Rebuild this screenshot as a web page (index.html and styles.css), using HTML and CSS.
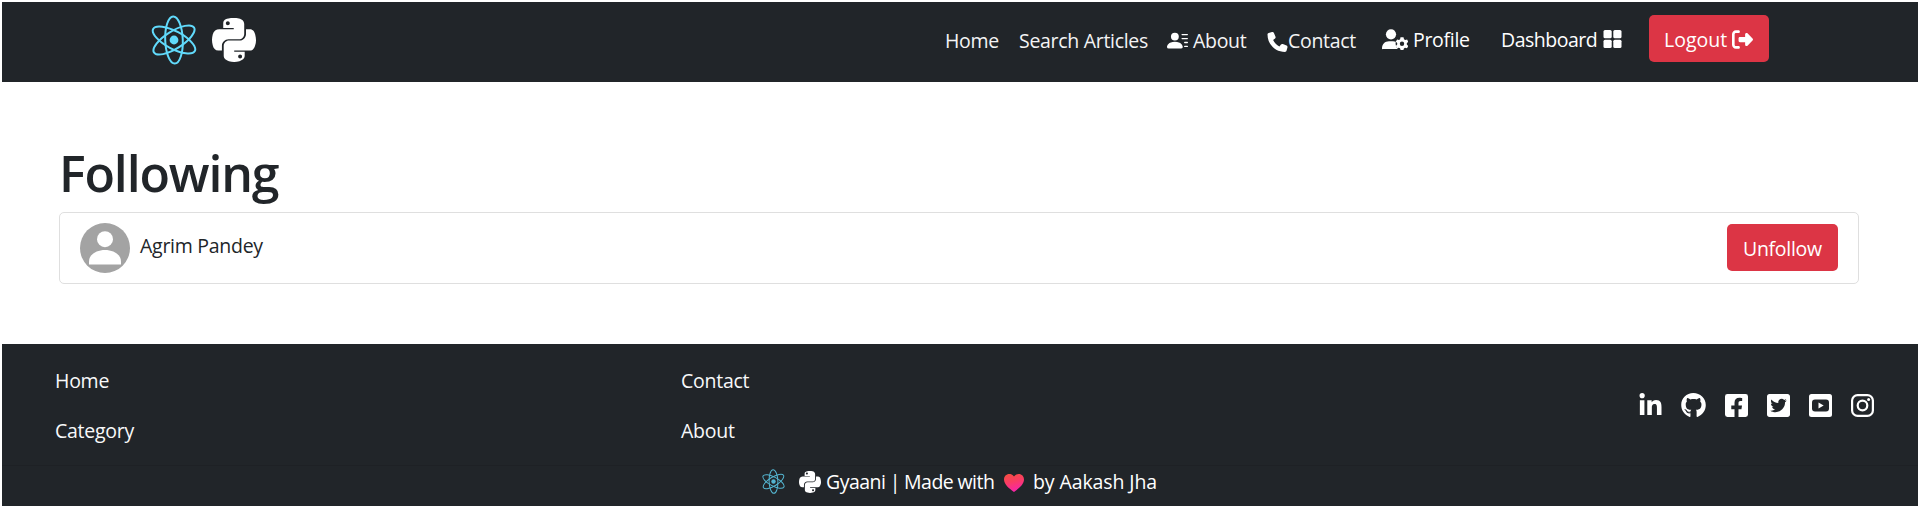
FILE: index.html
```html
<!DOCTYPE html>
<html lang="en">
<head>
<meta charset="utf-8">
<title>Following | Gyaani</title>
<link rel="stylesheet" href="styles.css">
</head>
<body>
<svg class="defs" aria-hidden="true">
  <symbol id="react" viewBox="0 0 46 50">
    <g fill="none" stroke="#61dafb" stroke-width="2" transform="rotate(-2 23 25)">
      <ellipse cx="23" cy="25" rx="8.800" ry="23.600"/>
      <ellipse cx="23" cy="25" rx="8.800" ry="23.600" transform="rotate(60 23 25)"/>
      <ellipse cx="23" cy="25" rx="8.800" ry="23.600" transform="rotate(120 23 25)"/>
    </g>
    <circle cx="23" cy="25" r="4.400" fill="#61dafb"/>
  </symbol>
  <symbol id="python" viewBox="0 32 448 448"><path d="M439.8 200.5c-7.7-30.9-22.3-54.2-53.4-54.2h-40.1v47.4c0 36.8-31.2 67.8-66.8 67.8H172.7c-29.2 0-53.4 25-53.4 54.3v101.8c0 29 25.2 46 53.4 54.3 33.8 9.9 66.3 11.7 106.8 0 26.9-7.8 53.4-23.5 53.4-54.3v-40.7H226.2v-13.6h160.2c31.1 0 42.6-21.7 53.4-54.2 11.2-33.5 10.7-65.7 0-108.6zM286.2 404c11.1 0 20.1 9.1 20.1 20.3 0 11.3-9 20.4-20.1 20.4-11 0-20.1-9.2-20.1-20.4.1-11.3 9.1-20.3 20.1-20.3zM167.8 248.1h106.8c29.7 0 53.4-24.5 53.4-54.3V91.9c0-29-24.4-50.7-53.4-55.6-35.8-5.9-74.7-5.6-106.8.1-45.2 8-53.4 24.7-53.4 55.6v40.7h106.9v13.6h-147c-31.1 0-58.3 18.7-66.8 54.2-9.8 40.7-10.2 66.1 0 108.6 7.6 31.6 25.7 54.2 56.8 54.2H101v-48.8c0-35.3 30.5-66.4 66.8-66.4zm-6.7-142.6c-11.1 0-20.1-9.1-20.1-20.3.1-11.3 9-20.4 20.1-20.4 11 0 20.1 9.2 20.1 20.4s-9 20.3-20.1 20.3z"/></symbol>
</svg>

<header class="navbar">
  <a class="brand"><svg class="brand-react"><use href="#react"/></svg><svg class="brand-python"><use href="#python"/></svg></a>
  <nav class="nav">
    <a class="link w-home">Home</a>
    <a class="link w-search">Search Articles</a>
    <a class="link w-about"><svg class="i-lines" viewBox="0 0 16 16"><path d="M6 8a3 3 0 1 0 0-6 3 3 0 0 0 0 6m-5 6s-1 0-1-1 1-4 6-4 6 3 6 4-1 1-1 1zM11 3.5a.5.5 0 0 1 .5-.5h4a.5.5 0 0 1 0 1h-4a.5.5 0 0 1-.5-.5m.5 2.5a.5.5 0 0 0 0 1h4a.5.5 0 0 0 0-1zm2 3a.5.5 0 0 0 0 1h2a.5.5 0 0 0 0-1zm0 3a.5.5 0 0 0 0 1h2a.5.5 0 0 0 0-1z"/></svg>About</a>
    <a class="link w-contact"><svg class="i-phone" viewBox="0 0 512 512"><path d="M164.9 24.6c-7.7-18.6-28-28.5-47.4-23.2l-88 24C12.1 30.2 0 46 0 64C0 311.4 200.6 512 448 512c18 0 33.8-12.1 38.6-29.5l24-88c5.3-19.4-4.6-39.7-23.2-47.4l-96-40c-16.3-6.8-35.2-2.1-46.3 11.6L304.7 368C234.3 334.7 177.3 277.7 144 207.3L193.3 167c13.7-11.2 18.4-30 11.6-46.3l-40-96z"/></svg>Contact</a>
    <a class="link strong w-profile"><svg class="i-gear" viewBox="0 0 26 21"><circle cx="9" cy="5.300" r="5.100"/><path d="M0 19.400C0 15 3 12.200 7 12.200h4c1.200 0 2 .2 2.800.5-.6 2.600.2 5.200 2 7.300H.8C.3 20.500 0 20 0 19.400z"/><path fill-rule="evenodd" d="M18.500 8.300h3l.5 2 1.200.7 1.900-.6 1.100 2.400-1.400 1.400v1.400l1.400 1.400-1.200 2.300-2-.5-1.100.7-.5 1.500h-2.800l-.6-1.700-1.200-.6-1.800.5-1.200-2.200 1.400-1.500v-1.400l-1.400-1.400 1.300-2.300 1.900.6 1.100-.7zM20 12.600a2.200 2.200 0 1 0 0 4.400 2.200 2.200 0 0 0 0-4.400z"/></svg>Profile</a>
    <a class="link strong w-dash">Dashboard<svg class="i-grid" viewBox="0 0 18 18"><rect width="8.200" height="8.200" rx="1.500"/><rect x="9.800" width="8.200" height="8.200" rx="1.500"/><rect y="9.800" width="8.200" height="8.200" rx="1.500"/><rect x="9.800" y="9.800" width="8.200" height="8.200" rx="1.500"/></svg></a>
    <button class="btn logout">Logout<svg class="i-out" viewBox="0 0 512 512"><path d="M377.9 105.9L500.7 228.7c7.2 7.2 11.3 17.1 11.3 27.3s-4.1 20.1-11.3 27.3L377.9 406.1c-6.4 6.4-15 9.9-24 9.9c-18.7 0-33.9-15.2-33.9-33.9l0-62.1-128 0c-17.7 0-32-14.3-32-32l0-64c0-17.7 14.3-32 32-32l128 0 0-62.1c0-18.7 15.2-33.9 33.9-33.9c9 0 17.6 3.6 24 9.9zM160 96L96 96c-17.7 0-32 14.3-32 32l0 256c0 17.7 14.3 32 32 32l64 0c17.7 0 32 14.3 32 32s-14.3 32-32 32l-64 0c-53 0-96-43-96-96L0 128C0 75 43 32 96 32l64 0c17.7 0 32 14.3 32 32s-14.3 32-32 32z"/></svg></button>
  </nav>
</header>

<main class="content">
  <h1 class="title">Following</h1>
  <div class="card">
    <svg class="avatar" viewBox="0 0 50 50"><circle cx="25" cy="25" r="25" fill="#a3a3a3"/><circle cx="25" cy="16.200" r="8" fill="#fff"/><path fill="#fff" d="M9 41.500v-3C9 31.500 16.500 27 25 27s16 4.500 16 11.500v3z"/></svg>
    <span class="name">Agrim Pandey</span>
    <button class="btn unfollow">Unfollow</button>
  </div>
</main>

<footer class="footer">
  <div class="footer-top">
    <ul class="col first"><li>Home</li><li>Category</li></ul>
    <ul class="col"><li>Contact</li><li>About</li></ul>
    <div class="social">
      <svg class="s-linkedin" viewBox="0 0 448 448"><path d="M100.28 448H7.4V148.9h92.88zM53.79 108.1C24.09 108.1 0 83.5 0 53.8a53.79 53.79 0 0 1 107.58 0c0 29.7-24.1 54.3-53.79 54.3zM447.9 448h-92.68V302.4c0-34.7-.7-79.2-48.29-79.2-48.29 0-55.69 37.7-55.69 76.7V448h-92.78V148.9h89.08v40.8h1.3c12.4-23.5 42.69-48.3 87.88-48.3 94 0 111.28 61.9 111.28 142.3V448z"/></svg>
      <svg class="s-github" viewBox="0 8 496 485"><path d="M165.900 397.400c0 2-2.300 3.600-5.200 3.600-3.300.3-5.600-1.300-5.600-3.600 0-2 2.300-3.600 5.200-3.600 3-.3 5.600 1.300 5.600 3.600zm-31.100-4.500c-.7 2 1.300 4.300 4.300 4.900 2.600 1 5.600 0 6.200-2s-1.300-4.300-4.300-5.200c-2.600-.7-5.500.3-6.200 2.300zm44.200-1.700c-2.900.7-4.900 2.600-4.600 4.900.3 2 2.900 3.300 5.900 2.600 2.900-.7 4.900-2.600 4.600-4.600-.3-1.900-3-3.200-5.900-2.900zM244.800 8C106.100 8 0 113.300 0 252c0 110.900 69.800 205.800 169.500 239.200 12.800 2.300 17.300-5.600 17.300-12.100 0-6.200-.3-40.400-.3-61.400 0 0-70 15-84.700-29.800 0 0-11.400-29.100-27.800-36.600 0 0-22.900-15.700 1.600-15.400 0 0 24.900 2 38.600 25.800 21.900 38.600 58.600 27.500 72.900 20.900 2.300-16 8.800-27.100 16-33.700-55.900-6.200-112.300-14.300-112.300-110.500 0-27.500 7.600-41.300 23.600-58.900-2.600-6.500-11.100-33.300 2.600-67.900 20.900-6.500 69 27 69 27 20-5.600 41.500-8.500 62.800-8.500s42.800 2.900 62.800 8.500c0 0 48.100-33.600 69-27 13.700 34.700 5.200 61.400 2.600 67.900 16 17.700 25.800 31.500 25.800 58.900 0 96.500-58.900 104.200-114.800 110.500 9.200 7.900 17 22.900 17 46.400 0 33.700-.3 75.400-.3 83.600 0 6.500 4.600 14.400 17.300 12.100C428.200 457.800 496 362.900 496 252 496 113.300 383.500 8 244.800 8z"/></svg>
      <svg class="s-box" viewBox="0 32 448 448"><path d="M400 32H48A48 48 0 0 0 0 80v352a48 48 0 0 0 48 48h137.250V327.690h-63V256h63v-54.640c0-62.150 37-96.480 93.670-96.480 27.140 0 55.520 4.840 55.520 4.840v61h-31.270c-30.810 0-40.420 19.120-40.420 38.730V256h68.780l-11 71.690h-57.780V480H400a48 48 0 0 0 48-48V80a48 48 0 0 0-48-48z"/></svg>
      <svg class="s-box" viewBox="0 32 448 448"><path d="M400 32H48C21.500 32 0 53.500 0 80v352c0 26.500 21.500 48 48 48h352c26.500 0 48-21.500 48-48V80c0-26.500-21.500-48-48-48zm-48.900 158.800c.2 2.800.2 5.700.2 8.500 0 86.700-66 186.600-186.600 186.600-37.200 0-71.700-10.800-100.700-29.400 5.300.6 10.400.8 15.800.8 30.700 0 58.900-10.400 81.400-28-28.800-.6-53-19.500-61.300-45.500 10.100 1.500 19.200 1.500 29.600-1.200-30-6.100-52.500-32.500-52.500-64.400v-.8c8.700 4.900 18.900 7.900 29.600 8.300a65.447 65.447 0 0 1-29.200-54.600c0-12.200 3.200-23.400 8.900-33.100 32.300 39.800 80.800 65.800 135.200 68.600-9.300-44.500 24-80.600 64-80.600 18.900 0 35.900 7.900 47.900 20.700 14.800-2.800 29-8.300 41.600-15.800-4.900 15.200-15.200 28-28.800 36.100 13.200-1.400 26-5.100 37.800-10.200-8.900 13.100-20.100 24.700-32.900 34z"/></svg>
      <svg class="s-box" viewBox="0 0 23 23"><rect width="23" height="23" rx="2.500"/><rect x="3" y="5.500" width="17" height="12" rx="3" fill="#212529"/><path d="M9.500 8.500l5.200 3-5.200 3z"/></svg>
      <svg class="s-box" viewBox="0 0 23 23"><g fill="none" stroke="#fff" stroke-width="2.200"><rect x="1.100" y="1.100" width="20.800" height="20.800" rx="5.500"/><circle cx="11.500" cy="11.500" r="4.800"/></g><circle cx="17.600" cy="5.400" r="1.500"/></svg>
    </div>
  </div>
  <div class="credit">
    <svg class="c-react"><use href="#react"/></svg>
    <svg class="c-python"><use href="#python"/></svg>
    <span class="c-made">Gyaani | Made with</span>
    <svg class="c-heart" viewBox="0 0 20 18"><defs><linearGradient id="hg" x1="0" y1="0" x2=".3" y2="1"><stop offset="0" stop-color="#f4503f"/><stop offset=".5" stop-color="#fa3d63"/><stop offset="1" stop-color="#f926a5"/></linearGradient></defs><path fill="url(#hg)" d="M10 2.500C8.500.5 6.800 0 5.300 0 2.200 0 0 2.300 0 5.600c0 5 5.500 9.200 10 12.400 4.500-3.200 10-7.400 10-12.400C20 2.300 17.800 0 14.700 0c-1.500 0-3.200.5-4.700 2.500z"/></svg>
    <span class="c-by">by Aakash Jha</span>
  </div>
</footer>
</body>
</html>
```
FILE: styles.css
```css
* { box-sizing: border-box; }
body {
  margin: 0;
  padding: 2px 2px 3px;
  background: #fff;
  color: #212529;
  font: 400 19.5px/30px "Open Sans", "Noto Sans", sans-serif;
  letter-spacing: -0.3px;
}
svg { display: block; flex: none; fill: #fff; }
.defs { position: absolute; width: 0; height: 0; }

.navbar {
  display: flex;
  justify-content: space-between;
  height: 80px;
  padding: 0 149px;
  background: #212529;
  color: #fff;
}
.brand { display: flex; gap: 15px; padding-top: 13px; }
.brand-react { width: 46px; height: 50px; }
.brand-python { width: 44px; height: 44px; margin-top: 3px; }
.nav { display: flex; padding-top: 13px; }
.link { display: flex; height: 30px; margin-top: 11px; white-space: nowrap; color: #f4f4f5; }
.strong { margin-top: 10px; color: #fff; }
.w-home { width: 74px; }
.w-search { width: 148px; }
.w-about { width: 100px; }
.w-contact { width: 115px; }
.w-profile { width: 119px; }
.w-dash { width: 148px; letter-spacing: -0.5px; }
.i-lines { width: 21px; height: 21px; margin: 4px 5px 0 0; }
.i-phone { width: 21px; height: 20px; margin: 6px 0 0; }
.i-gear { width: 26px; height: 21px; margin: 4px 5px 0 0; }
.i-grid { width: 19px; height: 18px; margin: 5px 0 0 6px; }
.i-out { width: 21px; height: 21px; margin: 4px 0 0 5px; }

.btn {
  display: flex;
  height: 47px;
  padding: 10px 15px 0;
  border: 0;
  border-radius: 5px;
  background: #dc3545;
  color: #fff;
  font: inherit;
  letter-spacing: inherit;
  white-space: nowrap;
}
.logout { width: 120px; letter-spacing: 0; }

.content { height: 262px; padding: 61px 59px 0 57px; }
.title { margin: 0 0 9px; font-size: 50px; font-weight: 600; line-height: 60px; letter-spacing: -1.15px; }
.card {
  display: flex;
  align-items: flex-start;
  height: 72px;
  padding: 10px 20px;
  border: 1px solid #dfdfdf;
  border-radius: 5px;
}
.avatar { width: 50px; height: 50px; }
.name { margin: 8px auto 0 10px; letter-spacing: -0.27px; }
.unfollow { width: 111px; margin-top: 1px; padding-left: 16px; }

.footer { height: 162px; background: #212529; color: #f8f9fa; }
.footer-top { display: flex; height: 122px; padding: 22px 44px 0 53px; border-bottom: 1px solid #1e2125; }
.col { width: 626px; margin: 0; padding: 0; list-style: none; letter-spacing: -0.25px; }
.col li { height: 50px; }
.social { display: flex; justify-content: flex-end; flex: 1; gap: 19px; padding-top: 28px; }
.s-linkedin { width: 23px; height: 22px; margin-top: -1px; }
.s-github { width: 25px; height: 24px; margin-top: -1px; }
.s-box { width: 23px; height: 23px; }

.credit { display: flex; padding: 1px 0 0 760px; color: #fff; white-space: nowrap; }
.c-react { width: 23px; height: 25px; margin: 2px 14px 0 0; opacity: .8; }
.c-python { width: 22px; height: 22px; margin: 4px 5px 0 0; }
.c-made { width: 178px; letter-spacing: -0.5px; word-spacing: -0.4px; }
.c-heart { width: 20px; height: 18px; margin-top: 7px; }
.c-by { margin-left: 9px; letter-spacing: -0.1px; }
```
